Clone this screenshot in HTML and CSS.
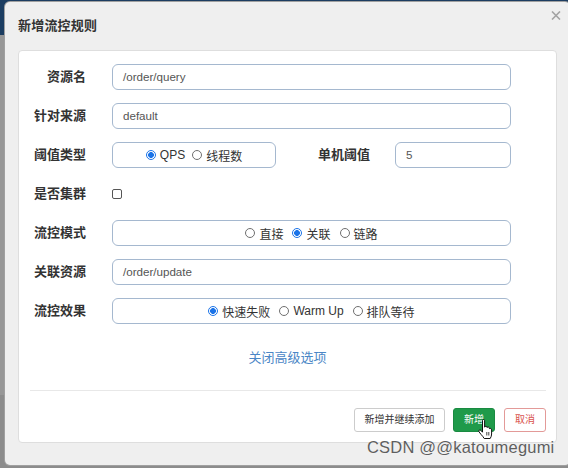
FILE: index.html
```html
<!DOCTYPE html>
<html lang="zh">
<head>
<meta charset="utf-8">
<title>新增流控规则</title>
<link rel="stylesheet" href="styles.css">
</head>
<body>
<div class="dialog">
  <div class="dialog-header">
    <h4 class="dialog-title">新增流控规则</h4>
    <span class="close" aria-label="close">
      <svg width="10" height="9" viewBox="0 0 10 9"><path d="M1 0.5 L9 8.5 M9 0.5 L1 8.5" stroke="#a3a3a3" stroke-width="1.6" fill="none"/></svg>
    </span>
  </div>
  <div class="panel">
    <div class="form">
      <div class="row">
        <label class="label">资源名</label>
        <div class="field">/order/query</div>
      </div>
      <div class="row">
        <label class="label">针对来源</label>
        <div class="field">default</div>
      </div>
      <div class="row">
        <label class="label">阈值类型</label>
        <div class="split">
          <div class="group group-small">
            <span class="opt"><span class="radio checked"></span>QPS</span>
            <span class="opt"><span class="radio"></span>线程数</span>
          </div>
          <label class="label label-inline">单机阈值</label>
          <div class="field field-grow">5</div>
        </div>
      </div>
      <div class="row">
        <label class="label">是否集群</label>
        <div class="check-cell"><span class="checkbox"></span></div>
      </div>
      <div class="row">
        <label class="label">流控模式</label>
        <div class="group">
          <span class="opt"><span class="radio"></span>直接</span>
          <span class="opt"><span class="radio checked"></span>关联</span>
          <span class="opt"><span class="radio"></span>链路</span>
        </div>
      </div>
      <div class="row">
        <label class="label">关联资源</label>
        <div class="field">/order/update</div>
      </div>
      <div class="row">
        <label class="label">流控效果</label>
        <div class="group">
          <span class="opt"><span class="radio checked"></span>快速失败</span>
          <span class="opt"><span class="radio"></span>Warm Up</span>
          <span class="opt"><span class="radio"></span>排队等待</span>
        </div>
      </div>
    </div>
    <div class="toggle"><a class="link">关闭高级选项</a></div>
    <div class="divider"></div>
    <div class="actions">
      <button class="btn btn-default">新增并继续添加</button>
      <button class="btn btn-success">新增
        <svg class="cursor" width="15" height="21" viewBox="0 0 15 21"><path d="M4.5 1.6 Q4.5 0.5 5.5 0.5 Q6.6 0.5 6.6 1.6 V8.2 Q7 7.1 8 7.3 Q9 7.5 9.1 8.6 Q9.5 7.8 10.5 8.1 Q11.4 8.4 11.4 9.6 Q12 9 12.8 9.5 Q13.6 10 13.6 11 V15 Q13.6 17.2 12.2 19.5 H6.2 Q5 17.5 3 15.4 L1 12.8 Q0.4 11.8 1.3 11.1 Q2.2 10.6 3 11.5 L4.5 13.2 Z" fill="#fff" stroke="#111" stroke-width="1" stroke-linejoin="round"/><path d="M8.8 13 V16.5 M10.8 13 V16.5" stroke="#111" stroke-width="0.8"/></svg>
      </button>
      <button class="btn btn-danger">取消</button>
    </div>
  </div>
  <div class="watermark">CSDN @@katoumegumi</div>
</div>
</body>
</html>
```

FILE: styles.css
```css
html, body {
  margin: 0;
  padding: 0;
}
body {
  width: 568px;
  height: 468px;
  overflow: hidden;
  background: linear-gradient(#1c3d61 0, #1c3d61 35px, #979797 35px, #979797 395px, #8c8c8c 395px);
  font-family: "Liberation Sans", "Noto Sans CJK SC", sans-serif;
  color: #333;
}
.dialog {
  position: relative;
  margin: 2px 0 0 5px;
  width: 539px;
  padding: 0 13px 22px 13px;
  background: #efefef;
  border-radius: 5px;
  box-shadow: 0 0 0 1px #a0a0a0;
}
.dialog-header {
  height: 48px;
  display: flex;
  align-items: center;
  padding-bottom: 4px;
  box-sizing: border-box;
}
.dialog-title {
  margin: 0;
  font-size: 13px;
  font-weight: bold;
  color: #333;
  letter-spacing: 0.2px;
}
.close {
  position: absolute;
  top: 9px;
  right: 9px;
  line-height: 0;
}
.panel {
  background: #fff;
  border: 1px solid #dedede;
  border-radius: 4px;
  padding-top: 13px;
  box-sizing: border-box;
  height: 393px;
}
.form {
  display: flex;
  flex-direction: column;
  gap: 13px;
  padding-right: 45px;
}
.row {
  display: grid;
  grid-template-columns: 67px 1fr;
  column-gap: 26px;
  height: 26px;
  align-items: center;
}
.label {
  font-size: 13px;
  font-weight: bold;
  text-align: right;
  color: #333;
  line-height: 26px;
  white-space: nowrap;
}
.field {
  height: 26px;
  box-sizing: border-box;
  border: 1px solid #a5b8cf;
  border-radius: 6px;
  padding: 0 10px;
  font-size: 11.6px;
  line-height: 23px;
  color: #555;
}
.split {
  display: flex;
  align-items: center;
  height: 26px;
}
.group {
  height: 26px;
  box-sizing: border-box;
  border: 1px solid #a5b8cf;
  border-radius: 6px;
  display: flex;
  align-items: center;
  justify-content: center;
  gap: 9px;
  font-size: 12px;
  color: #333;
}
.group-small {
  width: 164px;
  flex: none;
  gap: 7px;
}
.label-inline {
  width: 94px;
  flex: none;
  margin-right: 25px;
}
.field-grow {
  flex: 1;
}
.opt {
  display: inline-flex;
  align-items: center;
  gap: 4px;
  white-space: nowrap;
}
.radio {
  width: 10px;
  height: 10px;
  box-sizing: border-box;
  border-radius: 50%;
  border: 1px solid #6f6f6f;
  background: #fff;
  display: inline-block;
}
.radio.checked {
  border-color: #1a73e8;
  background: radial-gradient(circle, #1a73e8 0, #1a73e8 2.6px, #fff 3.2px);
}
.check-cell {
  display: flex;
  align-items: center;
  height: 26px;
}
.checkbox {
  width: 10px;
  height: 10px;
  box-sizing: border-box;
  border: 1px solid #555;
  border-radius: 2px;
  background: #fff;
  display: inline-block;
}
.toggle {
  margin-top: 23px;
  text-align: center;
  line-height: 20px;
}
.link {
  font-size: 13px;
  color: #4a86c6;
  cursor: pointer;
}
.divider {
  margin: 22px 10px 0 11px;
  border-top: 1px solid #e8e8e8;
}
.actions {
  margin-top: 17px;
  display: flex;
  justify-content: flex-end;
  gap: 8px;
  padding-right: 10px;
}
.btn {
  position: relative;
  height: 24px;
  box-sizing: border-box;
  padding: 0 10px;
  font-family: "Liberation Sans", "Noto Sans CJK SC", sans-serif;
  font-size: 10px;
  line-height: 22px;
  border-radius: 3px;
  border: 1px solid #ccc;
  background: #fff;
  color: #333;
}
.btn-default {
  padding: 0 9.5px;
}
.btn-success {
  background: #1f9a4a;
  border-color: #1a8a41;
  color: #fff;
}
.btn-danger {
  color: #d9534f;
  border-color: #e39a98;
  margin-left: 1px;
}
.cursor {
  position: absolute;
  left: 24px;
  top: 10px;
}
.watermark {
  position: absolute;
  left: 362px;
  top: 436px;
  font-size: 16.5px;
  color: #5f5f5f;
  letter-spacing: 0.2px;
  text-shadow: 0 0 1px rgba(255,255,255,0.8);
  white-space: nowrap;
}
```
